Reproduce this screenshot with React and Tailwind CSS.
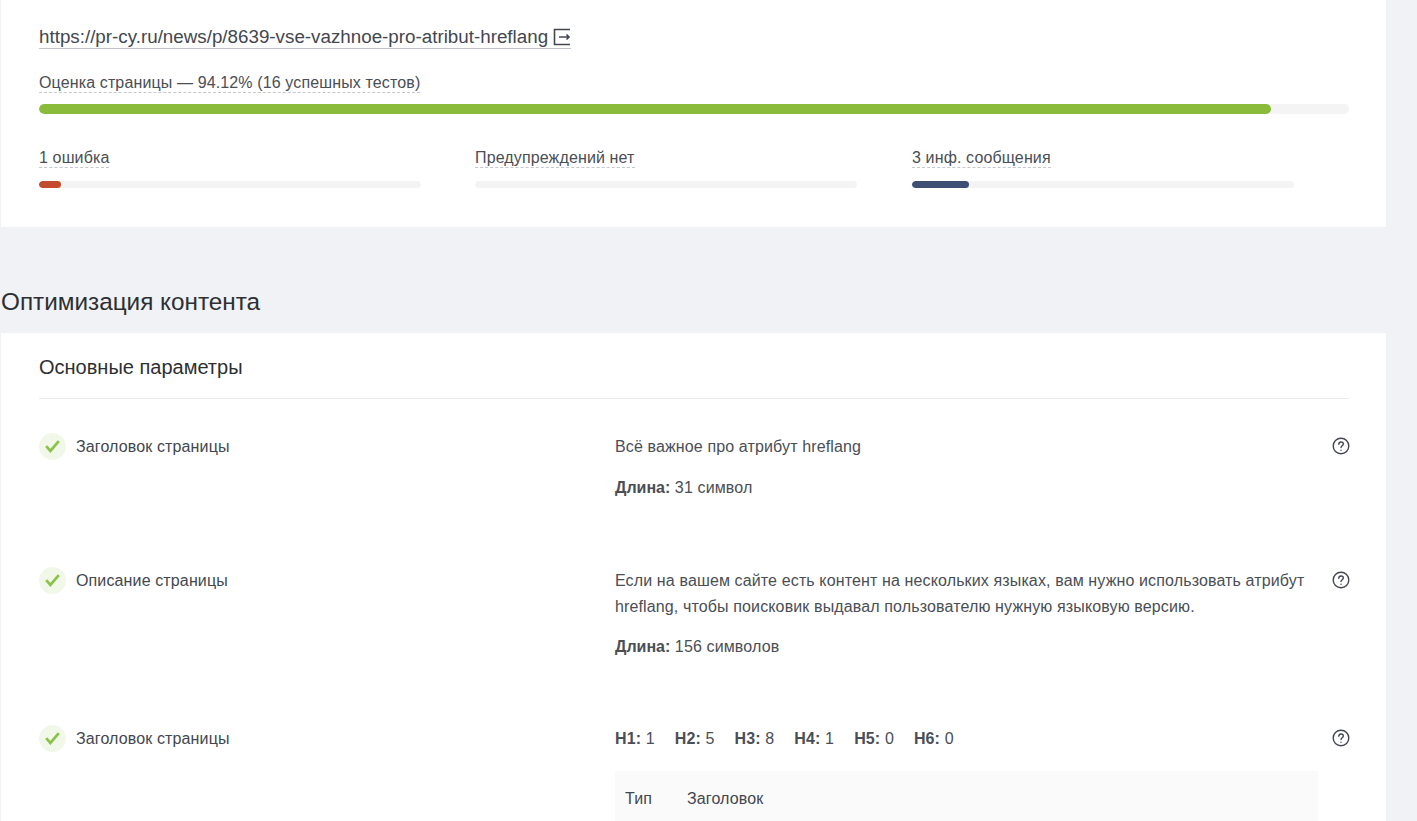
import React from 'react';

const QuestionIcon = () => (
  <svg width="18" height="18" viewBox="0 0 18 18" fill="none" stroke="#43474f" strokeWidth="1.4" strokeLinecap="round" className="block">
    <circle cx="9" cy="9" r="7.8" />
    <path d="M6.8 7.2c0-1.3 1-2.2 2.3-2.2s2.2.8 2.2 2c0 1.8-2.3 1.8-2.3 3.6" />
    <path d="M9 13.1v.1" />
  </svg>
);

const CheckBadge = () => (
  <div className="w-[27px] h-[27px] rounded-full bg-[#f1f8e9] flex items-center justify-center shrink-0">
    <svg width="15" height="13" viewBox="0 0 15 13" fill="none" stroke="#8bc34a" strokeWidth="2.7">
      <path d="M1.2 6.2l4.2 4.8L13.8 1.2" />
    </svg>
  </div>
);

const ExternalIcon = () => (
  <svg width="18" height="18" viewBox="0 0 18 18" fill="none" stroke="#43474f" strokeWidth="1.6" className="ml-[5px] shrink-0">
    <path d="M17 1.5H1.5v15H17" />
    <path d="M6 9h10M13.5 6.5L16 9l-2.5 2.5" />
  </svg>
);

const Stat = ({ label, fill, color, className }) => (
  <div className={className}>
    <div className="h-[21px] flex items-start">
      <span className="text-[16px] tracking-[0.13px] leading-[19px] pt-[1px] text-[#4a4e55] border-b border-dashed border-[#c4c7cc]">{label}</span>
    </div>
    <div className="mt-[13px] h-[7px] w-[382px] rounded-full bg-[#f4f4f4] overflow-hidden">
      <div className={`h-full rounded-full ${color} ${fill}`} />
    </div>
  </div>
);

const Row = ({ title, children, className }) => (
  <div className={`flex items-start ${className}`}>
    <div className="w-[576px] flex items-center gap-[10px] shrink-0 -mt-[1px]">
      <CheckBadge />
      <span className="text-[16px] tracking-[0.13px] text-[#43474f]">{title}</span>
    </div>
    <div className="w-[703px] shrink-0 text-[16px] tracking-[0.13px] leading-[26px] text-[#4a4e55]">{children}</div>
    <div className="ml-[14px] mt-[3px]">
      <QuestionIcon />
    </div>
  </div>
);

const headings = [
  ['H1:', 1],
  ['H2:', 5],
  ['H3:', 8],
  ['H4:', 1],
  ['H5:', 0],
  ['H6:', 0],
];

export default function App() {
  return (
    <div className="h-[821px] overflow-hidden bg-[#f0f2f6] font-['Liberation_Sans',Arial,sans-serif]">
      <div className="w-[1385px] ml-[1px] h-[227px] bg-white px-[38px] pt-[24px]">
        <a className="inline-flex items-center h-[25px] pt-[2px] text-[18.8px] text-[#43474f] border-b border-[#c0c3c9]" href="#">
          https://pr-cy.ru/news/p/8639-vse-vazhnoe-pro-atribut-hreflang
          <ExternalIcon />
        </a>
        <div className="mt-[22px] h-[21px] flex items-start">
          <span className="text-[16px] tracking-[0.13px] leading-[19px] pt-[1px] text-[#4a4e55] border-b border-dashed border-[#c4c7cc]">
            Оценка страницы — 94.12% (16 успешных тестов)
          </span>
        </div>
        <div className="mt-[11px] h-[10px] w-[1310px] rounded-full bg-[#f4f4f4] overflow-hidden">
          <div className="h-full w-[94.05%] rounded-full bg-[#8abb3a]" />
        </div>
        <div className="mt-[33px] flex">
          <Stat className="w-[436px]" label="1 ошибка" fill="w-[22px]" color="bg-[#c44c2e]" />
          <Stat className="w-[437px]" label="Предупреждений нет" fill="w-0" color="bg-[#f4f4f4]" />
          <Stat label="3 инф. сообщения" fill="w-[57px]" color="bg-[#3f4f73]" />
        </div>
      </div>

      <h2 className="mt-[60px] ml-[1px] text-[24.3px] leading-[30px] font-normal text-[#2d2f33]">Оптимизация контента</h2>

      <div className="mt-[16px] w-[1385px] ml-[1px] bg-white px-[38px] pt-[21px] pb-[40px]">
        <h3 className="text-[20px] leading-[26px] font-normal text-[#2d2f33] pb-[18px] border-b border-[#eaebed] w-[1310px]">
          Основные параметры
        </h3>

        <Row title="Заголовок страницы" className="mt-[35px]">
          <p>Всё важное про атрибут hreflang</p>
          <p className="mt-[15px]"><b className="tracking-normal">Длина:</b> 31 символ</p>
        </Row>

        <Row title="Описание страницы" className="mt-[67px]">
          <p>Если на вашем сайте есть контент на нескольких языках, вам нужно использовать атрибут hreflang, чтобы поисковик выдавал пользователю нужную языковую версию.</p>
          <p className="mt-[14px]"><b className="tracking-normal">Длина:</b> 156 символов</p>
        </Row>

        <Row title="Заголовок страницы" className="mt-[66px]">
          <div className="flex gap-[20px]">
            {headings.map(([name, count]) => (
              <span key={name}><b>{name}</b> {count}</span>
            ))}
          </div>
          <div className="mt-[19px] w-[703px] h-[56px] bg-[#fafafa] flex items-center px-[10px] text-[#43474f]">
            <span className="w-[62px]">Тип</span>
            <span>Заголовок</span>
          </div>
        </Row>
      </div>
    </div>
  );
}
